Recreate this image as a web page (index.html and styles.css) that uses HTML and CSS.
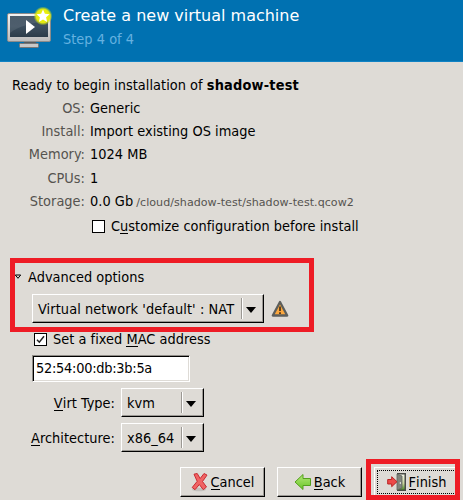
FILE: index.html
```html
<!DOCTYPE html>
<html lang="en">
<head>
<meta charset="utf-8">
<title>Create a new virtual machine</title>
<link rel="stylesheet" href="styles.css">
</head>
<body>
<main class="wizard">
  <header class="header">
    <svg class="vm-icon" width="48" height="48" viewBox="0 0 48 48">
      <defs>
        <linearGradient id="screen" x1="0" y1="0" x2="0" y2="1"><stop offset="0" stop-color="#3a4c5c"/><stop offset=".5" stop-color="#3d4f5f"/><stop offset="1" stop-color="#2c3c4a"/></linearGradient>
        <linearGradient id="bezel" x1="0" y1="0" x2="0" y2="1"><stop offset="0" stop-color="#f4f4f4"/><stop offset="1" stop-color="#bcbcbc"/></linearGradient>
        <radialGradient id="glow"><stop offset="0" stop-color="#f6f60a"/><stop offset=".72" stop-color="#e2ea10"/><stop offset="1" stop-color="#b9d820" stop-opacity="0"/></radialGradient>
      </defs>
      <path d="M19 36h12v4H19z" fill="#555b60"/>
      <rect x="14.500" y="38.500" width="19" height="4" rx="1" fill="#c8c8c8" stroke="#777"/>
      <rect x="2.500" y="8.500" width="43" height="28" rx="1.500" fill="url(#bezel)" stroke="#8b8b8b"/>
      <rect x="5" y="11" width="38" height="21" fill="url(#screen)"/>
      <path d="M5 11h38v5C28 17 12 22 5 28z" fill="#fff" opacity=".09"/>
      <path d="M21 15v14l9-7z" fill="#fff"/>
      <circle cx="38" cy="11" r="9.500" fill="url(#glow)"/>
      <path d="M38 4.500l1.900 4.200 4.700.5-3.500 3.100 1 4.700-4.100-2.400-4.100 2.400 1-4.700-3.500-3.100 4.700-.5z" fill="#fff"/>
    </svg>
    <div class="titles">
      <h1>Create a new virtual machine</h1>
      <p>Step 4 of 4</p>
    </div>
  </header>

  <p class="ready">Ready to begin installation of <b>shadow-test</b></p>
  <dl class="summary">
    <dt>OS:</dt><dd>Generic</dd>
    <dt>Install:</dt><dd>Import existing OS image</dd>
    <dt>Memory:</dt><dd>1024 MB</dd>
    <dt>CPUs:</dt><dd>1</dd>
    <dt>Storage:</dt><dd>0.0 Gb <small>/cloud/shadow-test/shadow-test.qcow2</small></dd>
  </dl>
  <div class="check customize"><span class="box"></span><span>C<u>u</u>stomize configuration before install</span></div>

  <section class="advanced">
    <div class="expander">
      <svg width="8" height="6" viewBox="0 0 8 6"><path d="M1.300 1h5.400L4 4.300z" fill="none" stroke="#000"/></svg>
      <span>Advanced options</span>
    </div>
    <div class="network">
      <div class="combo combo-network"><span>Virtual network 'default' : NAT</span><i class="arrow"></i></div>
      <svg width="18" height="18" viewBox="0 0 18 18">
        <path d="M9 2L16.200 15.500H1.800z" fill="#fba63c" stroke="#5c5e5b" stroke-width="2.300" stroke-linejoin="round"/>
        <path d="M9 6.500v4.500M9 12.200v1.800" stroke="#3a2a14" stroke-width="1.600"/>
      </svg>
    </div>
  </section>
  <div class="check mac"><span class="box"><svg width="11" height="11" viewBox="0 0 11 11"><path d="M2 5.800l2.300 2.400L9 2.200" fill="none" stroke="#222" stroke-width="1.500"/></svg></span><span>Set a fixed <u>M</u>AC address</span></div>
  <div class="entry">52:54:00:db:3b:5a</div>
  <div class="field"><label><u>V</u>irt Type:</label><div class="combo"><span>kvm</span><i class="arrow"></i></div></div>
  <div class="field"><label><u>A</u>rchitecture:</label><div class="combo"><span>x86_64</span><i class="arrow"></i></div></div>

  <footer class="actions">
    <button class="btn">
      <svg width="18" height="20" viewBox="0 0 18 20"><ellipse cx="8" cy="17.500" rx="7" ry="1.800" fill="#000" opacity=".12"/><path d="M3 2.200l3.200-.7 3 5 3.800-5 3 1.600-4.500 6.400 4 5.500-3.200 2.700-4-5.200-4.300 5.200-2.800-2.200 5-6.200z" fill="#f06464" stroke="#c92a31" stroke-linejoin="round"/></svg>
      <span><u>C</u>ancel</span>
    </button>
    <button class="btn">
      <svg width="18" height="18" viewBox="0 0 18 18"><defs><linearGradient id="green" x1="0" y1="0" x2="0" y2="1"><stop offset="0" stop-color="#b4e878"/><stop offset="1" stop-color="#68c526"/></linearGradient></defs><path d="M1 9L9 1.500v4h7.500v7H9v4z" fill="url(#green)" stroke="#55a01e" stroke-linejoin="round"/></svg>
      <span><u>B</u>ack</span>
    </button>
    <button class="btn finish">
      <svg width="20" height="20" viewBox="0 0 20 20">
        <defs><linearGradient id="grass" x1="0" y1="0" x2="0" y2="1"><stop offset="0" stop-color="#f2f2e8"/><stop offset=".6" stop-color="#c8d49a"/><stop offset="1" stop-color="#52902a"/></linearGradient></defs>
        <path d="M10 1h9v18h-9z" fill="#4a4c48"/>
        <path d="M11 2.500h6.500v15H11z" fill="url(#grass)"/>
        <path d="M10 2l5 2v12l-5 2z" fill="#80857d" stroke="#5e625b" stroke-width=".8"/>
        <path d="M13.300 10v2" stroke="#eee"/>
        <path d="M.7 7.500h4V4.700L10 9.700l-5.300 5V12h-4z" fill="#ed4949" stroke="#b92525" stroke-linejoin="round"/>
      </svg>
      <span><u>F</u>inish</span>
    </button>
  </footer>

  <div class="mark mark-network"></div>
  <div class="mark mark-finish"></div>
</main>
</body>
</html>
```
FILE: styles.css
```css
* { box-sizing: border-box; }
body { margin: 0; }
h1, p, dl, dd { margin: 0; font-weight: normal; }
svg { display: block; flex: none; }
u { text-decoration: none; border-bottom: 1px solid currentColor; display: inline-block; line-height: 14px; height: 15px; }

.wizard {
  position: relative;
  width: 463px;
  height: 500px;
  overflow: hidden;
  background: #dedbd6;
  color: #000;
  font: 14.400px/16px "DejaVu Sans Condensed", "DejaVu Sans", sans-serif;
  font-stretch: condensed;
  letter-spacing: .03px;
}
.header {
  display: flex;
  gap: 10px;
  height: 62px;
  padding: 5px 5px 0;
  background: #0071b1;
  border-bottom: 1px solid #1082c4;
}
.titles { padding-top: 1px; }
.titles h1 { font-family: "DejaVu Sans", sans-serif; font-stretch: normal; font-size: 16px; line-height: 20px; letter-spacing: 0; color: #fff; }
.titles p { line-height: 16px; margin-top: 5px; color: #65b1e0; }

.ready { margin: 15px 0 0 12px; line-height: 16px; }
.ready b { letter-spacing: .2px; }
.summary {
  display: grid;
  grid-template-columns: 85px 1fr;
  column-gap: 5px;
  grid-auto-rows: 23.300px;
  align-items: center;
  margin-top: 3px;
}
.summary dt { text-align: right; color: #55534f; }
.summary small { font-family: "DejaVu Sans", sans-serif; font-stretch: normal; font-size: 11.100px; line-height: 12px; color: #55534f; margin-left: -1px; }

.check { display: flex; align-items: center; gap: 6px; height: 16px; }
.box { width: 13px; height: 13px; border: 1px solid #000; background: #fff; }
.customize { margin: 6px 0 0 92px; }

.advanced { margin: 35px 0 0 14px; }
.expander { display: flex; align-items: center; gap: 6px; height: 16px; }
.network { display: flex; align-items: center; gap: 7px; margin: 9px 0 0 18px; }
.combo {
  display: flex;
  align-items: center;
  width: 83px;
  height: 29px;
  padding-left: 5px;
  border: 1px solid;
  border-color: #fff #000 #000 #fff;
  box-shadow: inset -1px -1px #9b9893;
}
.combo span { flex: 1; white-space: nowrap; }
.combo-network { width: 232px; letter-spacing: .08px; }
.arrow {
  width: 22px;
  height: 21px;
  border-left: 1px solid #9b9893;
  box-shadow: inset 1px 0 #fff;
  display: flex;
  align-items: center;
}
.arrow::before { content: ""; margin-left: 4px; margin-top: 2px; border: 5.500px solid transparent; border-top: 6px solid #000; border-bottom: 0; }
.mac { margin: 8px 0 0 34px; }
.entry {
  width: 158px;
  height: 27px;
  margin: 8px 0 6px 32px;
  padding: 4px 3px;
  background: #fff;
  border: 1px solid;
  border-color: #8f8c87 #fff #fff #8f8c87;
  box-shadow: inset 1px 1px #000, inset -1px -1px #dedbd6;
  letter-spacing: -.25px;
}
.field { display: flex; align-items: center; gap: 6px; margin-bottom: 6px; }
.field label { width: 115px; text-align: right; white-space: nowrap; }

.actions { display: flex; gap: 12px; margin: 15px 0 0 180px; }
.btn {
  display: flex;
  align-items: center;
  justify-content: center;
  gap: 2px;
  width: 85px;
  height: 30px;
  padding: 0;
  background: #dedbd6;
  border: 1px solid;
  border-color: #fff #000 #000 #fff;
  box-shadow: inset -1px -1px #9b9893;
  font: inherit;
  color: inherit;
}
.finish { outline: 1px dotted #000; outline-offset: -4px; }

.mark { position: absolute; border: 5px solid #ee1c25; }
.mark-network { left: 10px; top: 258px; width: 304px; height: 74px; }
.mark-finish { left: 366px; top: 459px; width: 94px; height: 41px; }
```
